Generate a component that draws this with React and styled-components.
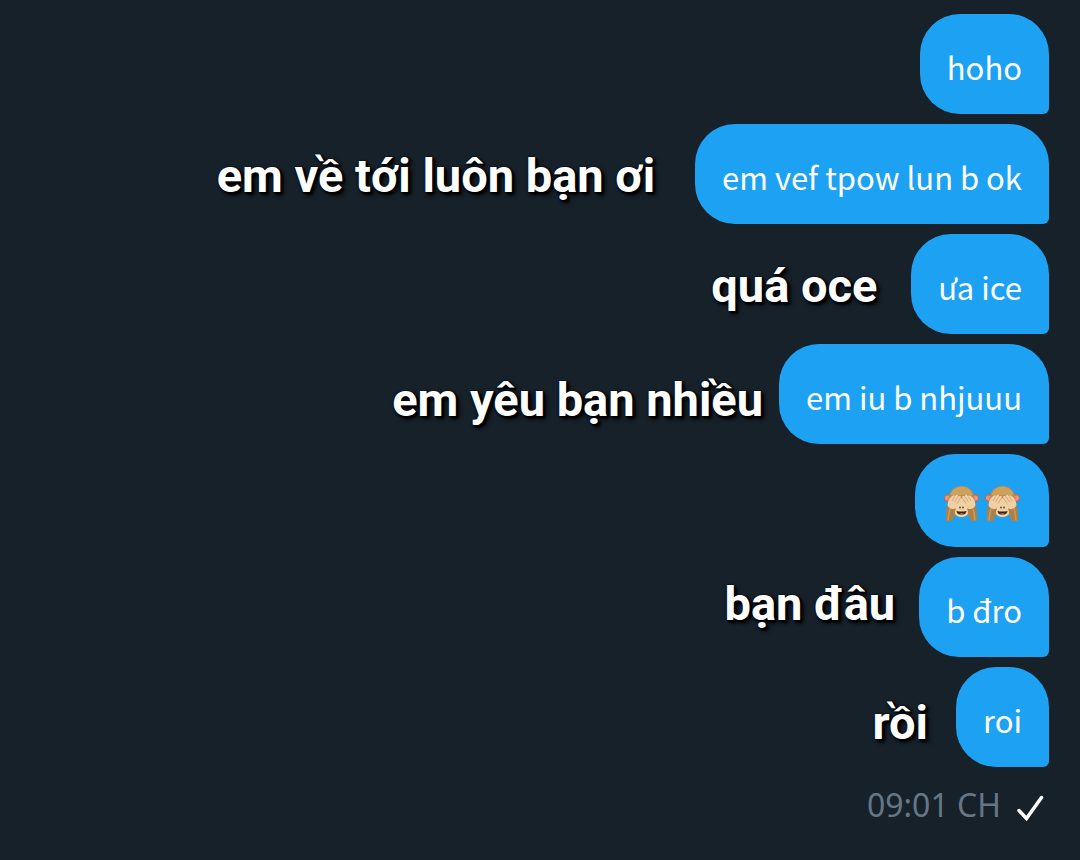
import React from "react";
import styled, { createGlobalStyle } from "styled-components";

const GlobalStyle = createGlobalStyle`
  * {
    box-sizing: border-box;
  }

  body {
    margin: 0;
    background: #17212a;
  }
`;

const Chat = styled.main`
  display: flex;
  flex-direction: column;
  align-items: flex-end;
  gap: 10px;
  min-height: 100vh;
  padding: 14px 31px 30px;
  background: #17212a;
  color: #fff;
`;

const Row = styled.div`
  display: flex;
  justify-content: flex-end;
  align-items: center;
  gap: ${(p) => p.$gap || 0}px;
`;

const Caption = styled.strong`
  font-family: Roboto, sans-serif;
  font-size: 47px;
  font-weight: 700;
  line-height: 54px;
  white-space: nowrap;
  padding-top: ${(p) => (p.$place === "low" ? 12 : p.$place === "high" ? 0 : 4)}px;
  padding-bottom: ${(p) => (p.$place === "high" ? 6 : 0)}px;
  text-shadow: 0 0 2px #000, 1px 1px 2px #000, 2px 2px 2px #000,
    3px 3px 4px #000;
`;

const Bubble = styled.div`
  display: flex;
  align-items: center;
  gap: 6px;
  padding: ${(p) => (p.$emoji ? "28px 29px 25px" : "29px 27px 23px")};
  border-radius: 40px 40px 6px 40px;
  background: #1da1f2;
  font-family: "Noto Sans CJK SC", sans-serif;
  font-size: 31px;
  line-height: 48px;
  white-space: nowrap;

  svg {
    display: block;
    margin-top: 3px;
  }
`;

const Status = styled.footer`
  display: flex;
  align-items: center;
  gap: 16px;
  padding: 4px 5px 0 0;
  color: #657786;
  font-family: "Noto Sans", sans-serif;
  font-size: 32px;
  font-weight: 400;
  line-height: 48px;

  svg {
    margin-top: 6px;
  }
`;

function Monkey() {
  return (
    <svg width="35" height="37" viewBox="0 0 35 37" role="img" aria-label="🙈">
      <circle cx="4" cy="13" r="4" fill="#a8784a" />
      <circle cx="31" cy="13" r="4" fill="#a8784a" />
      <circle cx="3.5" cy="13" r="2.5" fill="#f58f8f" />
      <circle cx="31.5" cy="13" r="2.5" fill="#f58f8f" />
      <path d="M17.500 1C9.500 1 4.500 7 4.500 14v8c0 6 6 9.500 13 9.500s13-3.500 13-9.500v-8C30.500 7 25.500 1 17.500 1Z" fill="#b98b50" />
      <path d="M17.500 1.500C12 1.500 8 5 6.500 10h22C27 5 23 1.500 17.500 1.500Z" fill="#cda05c" />
      <path d="M17.500 13c-3 5-7 8-7 13 0 4 3.500 6 7 6s7-2 7-6c0-5-4-8-7-13Z" fill="#efd3a4" />
      <path d="M1.500 36C2 30 2 25 3 20l9 3c-1 4-2.500 8-3 13Z" fill="#ad8048" />
      <path d="M33.500 36C33 30 33 25 32 20l-9 3c1 4 2.500 8 3 13Z" fill="#ad8048" />
      <path d="M4 35.500c.4-5 .8-8 2-12M31 35.500c-.4-5-.8-8-2-12" stroke="#c79b60" strokeWidth="1.500" fill="none" />
      <path d="M3.500 20C4 15 6 12 9 10.500c1.500-.8 2 0 1.500 1 2-2.500 4-2 3.500 0 2-1.500 3.500-.5 2.500 1.500 1.300-.3 1.500 1 .8 2.500L13 22c-2 3-8 3-9.500-2Z" fill="#f0cfa4" />
      <path d="M31.500 20c-.5-5-2.500-8-5.500-9.500-1.500-.8-2 0-1.500 1-2-2.500-4-2-3.500 0-2-1.500-3.500-.5-2.500 1.500-1.300-.3-1.500 1-.8 2.500L22 22c2 3 8 3 9.500-2Z" fill="#f0cfa4" />
      <path d="m8 16 2.500-4.500m0 5.500 3.500-5.500m-1 7 3.500-5.500M27 16l-2.500-4.500m0 5.500L21 11.500m1 7L18.500 13" stroke="#cf9f70" strokeWidth=".8" fill="none" />
      <circle cx="16" cy="22.500" r=".9" fill="#644027" />
      <circle cx="19" cy="22.500" r=".9" fill="#644027" />
      <path d="M12.500 26q5 1.200 10 0c-.5 3-2.500 3.500-5 3.500s-4.500-.5-5-3.500Z" fill="#42201a" />
      <path d="M15 28.700q2.500-.8 5 0-2.500 1-5 0Z" fill="#c96d5b" />
    </svg>
  );
}

function Check() {
  return (
    <svg width="27" height="26" viewBox="0 0 27 26" role="img" aria-label="Đã gửi">
      <path
        d="M2 15.500 9.500 23.500 24.500 2.500"
        fill="none"
        stroke="#fff"
        strokeWidth="3.500"
        strokeLinecap="round"
      />
    </svg>
  );
}

const messages = [
  { text: "hoho" },
  { text: "em vef tpow lun b ok", caption: "em về tới luôn bạn ơi", gap: 40 },
  { text: "ưa ice", caption: "quá oce", gap: 34 },
  { text: "em iu b nhjuuu", caption: "em yêu bạn nhiều", gap: 16, place: "low" },
  { monkeys: 2 },
  { text: "b đro", caption: "bạn đâu", gap: 24, place: "high" },
  { text: "roi", caption: "rồi", gap: 28, place: "low" },
];

function Message({ text, caption, gap, place, monkeys }) {
  return (
    <Row $gap={gap}>
      {caption && <Caption $place={place}>{caption}</Caption>}
      <Bubble $emoji={!!monkeys}>
        {text}
        {monkeys && [...Array(monkeys)].map((_, i) => <Monkey key={i} />)}
      </Bubble>
    </Row>
  );
}

function App() {
  return (
    <>
      <GlobalStyle />
      <Chat>
        {messages.map((m, i) => (
          <Message key={i} {...m} />
        ))}
        <Status>
          <time dateTime="21:01">09:01 CH</time>
          <Check />
        </Status>
      </Chat>
    </>
  );
}

export default App;
